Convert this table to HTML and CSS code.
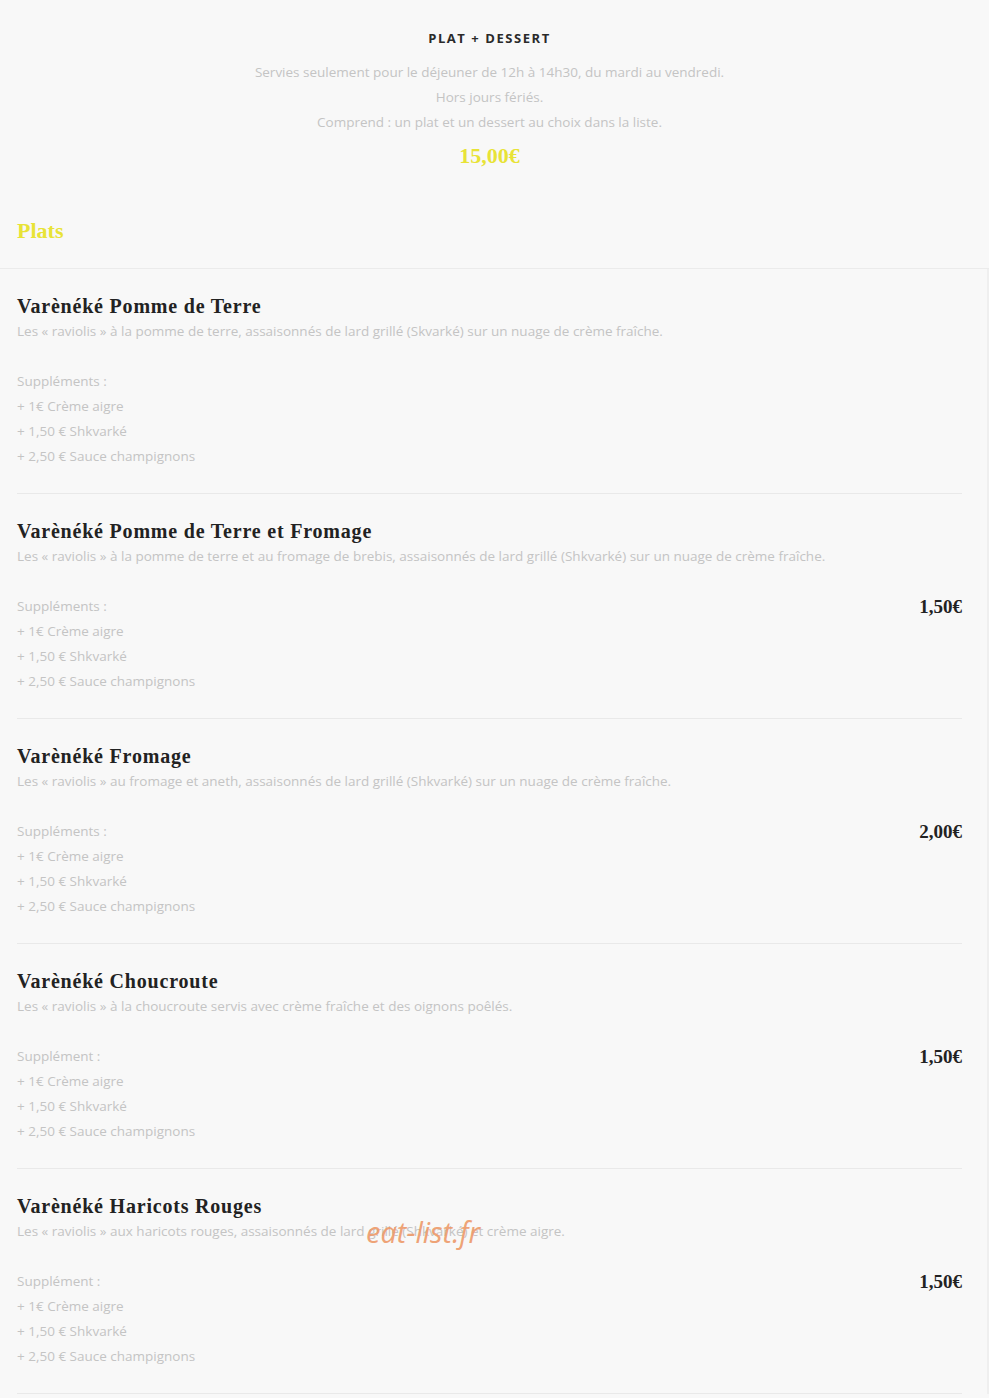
FILE: index.html
```html
<!DOCTYPE html>
<html lang="fr">
	<head>
		<meta charset="UTF-8" />
		<meta name="viewport" content="width=device-width, initial-scale=1.0" />
		<title>Plat + Dessert</title>
		<link rel="stylesheet" href="styles.css">
	</head>
	<body>
		<div class="formule">
			<h3>Plat + Dessert</h3>
			<p>Servies seulement pour le déjeuner de 12h à 14h30, du mardi au vendredi.</p>
			<p>Hors jours fériés.</p>
			<p>Comprend : un plat et un dessert au choix dans la liste.</p>
			<div class="formule-price">15,00€</div>
		</div>

		<h2 class="section-title">Plats</h2>

		<div class="menu">
			<div class="item">
				<div class="item-info">
					<h4>Varènéké Pomme de Terre</h4>
					<p>Les « raviolis » à la pomme de terre, assaisonnés de lard grillé (Skvarké) sur un nuage de crème fraîche.</p>
					<p class="sup-title">Suppléments :</p>
					<p>+ 1€ Crème aigre</p>
					<p>+ 1,50 € Shkvarké</p>
					<p>+ 2,50 € Sauce champignons</p>
				</div>
			</div>
			<div class="item">
				<div class="item-info">
					<h4>Varènéké Pomme de Terre et Fromage</h4>
					<p>Les « raviolis » à la pomme de terre et au fromage de brebis, assaisonnés de lard grillé (Shkvarké) sur un nuage de crème fraîche.</p>
					<p class="sup-title">Suppléments :</p>
					<p>+ 1€ Crème aigre</p>
					<p>+ 1,50 € Shkvarké</p>
					<p>+ 2,50 € Sauce champignons</p>
				</div>
				<div class="item-price">1,50€</div>
			</div>
			<div class="item">
				<div class="item-info">
					<h4>Varènéké Fromage</h4>
					<p>Les « raviolis » au fromage et aneth, assaisonnés de lard grillé (Shkvarké) sur un nuage de crème fraîche.</p>
					<p class="sup-title">Suppléments :</p>
					<p>+ 1€ Crème aigre</p>
					<p>+ 1,50 € Shkvarké</p>
					<p>+ 2,50 € Sauce champignons</p>
				</div>
				<div class="item-price">2,00€</div>
			</div>
			<div class="item">
				<div class="item-info">
					<h4>Varènéké Choucroute</h4>
					<p>Les « raviolis » à la choucroute servis avec crème fraîche et des oignons poêlés.</p>
					<p class="sup-title">Supplément :</p>
					<p>+ 1€ Crème aigre</p>
					<p>+ 1,50 € Shkvarké</p>
					<p>+ 2,50 € Sauce champignons</p>
				</div>
				<div class="item-price">1,50€</div>
			</div>
			<div class="item">
				<div class="item-info">
					<h4>Varènéké Haricots Rouges</h4>
					<p>Les « raviolis » aux haricots rouges, assaisonnés de lard grillé (Shkvarké) et crème aigre.</p>
					<p class="sup-title">Supplément :</p>
					<p>+ 1€ Crème aigre</p>
					<p>+ 1,50 € Shkvarké</p>
					<p>+ 2,50 € Sauce champignons</p>
				</div>
				<div class="item-price">1,50€</div>
			</div>
			<span class="watermark">eat-list.fr</span>
		</div>
	</body>
</html>
```

FILE: styles.css
```css
* {
	margin: 0;
	padding: 0;
	box-sizing: border-box;
}
body {
	font-family: "Open Sans", Lato, sans-serif;
	font-size: 13.5px;
	line-height: 25px;
	color: #c4c4c4;
	background-color: #f8f8f8;
}
.formule {
	text-align: center;
	padding: 26px 10px 0 0;
}
.formule h3 {
	font-size: 13px;
	font-weight: bold;
	letter-spacing: 0.12em;
	text-transform: uppercase;
	color: #2a2a2a;
	margin-bottom: 9px;
}
.formule-price {
	font-family: "Liberation Serif", serif;
	font-weight: bold;
	font-size: 22px;
	color: #e8e336;
	margin-top: 8px;
}
.section-title {
	font-family: "Liberation Serif", serif;
	font-size: 22px;
	font-weight: bold;
	color: #e8e336;
	padding: 50px 17px 25px;
	border-bottom: 1px solid #ebebeb;
}
.menu {
	position: relative;
	padding: 0 25px 0 17px;
	border-right: 2px solid #efefef;
}
.item {
	display: flex;
	align-items: flex-start;
	padding: 25px 0 24px;
	border-bottom: 1px solid #e9e9e9;
}
.item-info {
	flex: 1;
}
.item-info h4 {
	font-family: "Liberation Serif", serif;
	font-size: 20px;
	font-weight: bold;
	color: #222;
	letter-spacing: 0.04em;
}
.sup-title {
	margin-top: 25px;
}
.item-price {
	font-family: "Liberation Serif", serif;
	font-size: 19px;
	font-weight: bold;
	color: #222;
	margin-top: 75px;
}
.watermark {
	position: absolute;
	left: 366px;
	top: 950px;
	font-family: "Open Sans", sans-serif;
	font-style: italic;
	font-size: 29px;
	color: #ee9a6a;
	opacity: 0.9;
}
```
